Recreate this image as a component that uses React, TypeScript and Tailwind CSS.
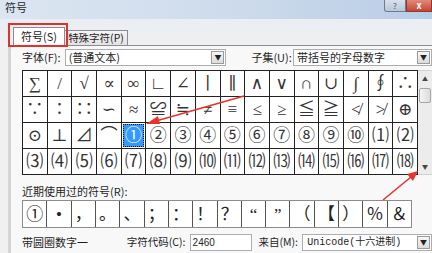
const symbols = [
  "∑", "/", "√", "∝", "∞", "∟", "∠", "∣", "∥", "∧", "∨", "∩", "∪", "∫", "∮", "∴",
  "∵", "∶", "∷", "∽", "≈", "≌", "≒", "≠", "≡", "≤", "≥", "≦", "≧", "≮", "≯", "⊕",
  "⊙", "⊥", "⊿", "⌒", "①", "②", "③", "④", "⑤", "⑥", "⑦", "⑧", "⑨", "⑩", "⑴", "⑵",
  "⑶", "⑷", "⑸", "⑹", "⑺", "⑻", "⑼", "⑽", "⑾", "⑿", "⒀", "⒁", "⒂", "⒃", "⒄", "⒅",
];

const recent = ["①", "•", "，", "。", "、", "；", "：", "！", "？", "“", "”", "（", "【", "）", "％", "＆"];

const ui = "font-['Noto_Sans_CJK_SC',sans-serif] text-[11px] text-[#1e1e1e]";
const sym = "font-['Liberation_Serif','DejaVu_Serif','Noto_Sans_CJK_SC',serif]";

const Arrow = () => <span className="text-[7px] leading-none text-[#222]">▼</span>;

const Dropdown: React.FC<{ width: string; text: string; mono?: boolean }> = ({ width, text, mono }) => {
  return (
    <div className={`${width} flex h-[17px] items-center border border-[#abadb3] bg-white`}>
      <span
        className={
          mono
            ? "flex-1 whitespace-nowrap pl-[4px] font-['Liberation_Mono','Noto_Sans_CJK_SC',monospace] text-[10px] leading-none text-[#222]"
            : "flex-1 whitespace-nowrap pl-[3px] leading-none"
        }
      >
        {text}
      </span>
      <div className="mr-px flex h-[13px] w-[13px] items-center justify-center border border-[#9a9a9a] bg-gradient-to-b from-[#f6f6f6] to-[#dcdcdc]">
        <Arrow />
      </div>
    </div>
  );
};

const SymbolDialog: React.FC = () => {
  return (
    <div className={`relative h-[253px] w-[432px] overflow-hidden bg-[#f0f0f0] ${ui}`}>
      {/* title bar */}
      <div className="flex h-[19px] items-start bg-gradient-to-r from-[#dce6f2] via-[#cfdcec] to-[#b8cde6]">
        <span className="mt-[2px] pl-[5px] text-[11px] leading-none text-[#2a2a2a]">符号</span>
        <div className="ml-auto flex">
          <div className="flex h-[12px] w-[22px] items-center justify-center rounded-bl-[3px] border border-t-0 border-[#6d7b8d] bg-gradient-to-b from-[#d8e1ec] to-[#b9c8da] text-[8px] leading-none text-[#555]">
            ?
          </div>
          <div className="flex h-[12px] w-[26px] items-center justify-center border border-t-0 border-[#8a3a30] bg-gradient-to-b from-[#e08a78] to-[#c7432f] text-[9px] font-bold leading-none text-white">
            x
          </div>
        </div>
      </div>

      {/* tabs */}
      <div className="flex h-[26px] items-end bg-gradient-to-b from-[#e9eef4] to-[#f0f0f0] pl-[13px]">
        <div className="flex h-[18px] w-[52px] items-center justify-center whitespace-nowrap border border-b-0 border-[#898c95] bg-white">
          符号(S)
        </div>
        <div className="flex h-[15px] w-[63px] items-center justify-center whitespace-nowrap border border-b-0 border-l-0 border-[#898c95] bg-gradient-to-b from-[#f4f4f4] to-[#e3e3e3] text-[10.5px]">
          特殊字符(P)
        </div>
      </div>

      {/* panel */}
      <div className="ml-[8px] h-[208px] border-l-[3px] border-t border-[#d4d4d4] border-t-[#898c95] bg-[#f8f8f8] pl-[11px]">
        <div className="mt-[3px] flex h-[17px] items-center">
          <span className="w-[43px] whitespace-nowrap leading-none">字体(F):</span>
          <Dropdown width="w-[163px]" text="(普通文本)" />
          <span className="ml-[25px] w-[42px] whitespace-nowrap leading-none">子集(U):</span>
          <Dropdown width="w-[140px]" text="带括号的字母数字" />
        </div>

        <div className="mt-[4px] flex">
          <div className="grid w-[397px] grid-cols-16 gap-px border border-[#222] bg-[#222]">
            {symbols.map((s, i) =>
              i === 36 ? (
                <div key={i} className="flex h-[25px] items-center justify-center bg-white p-px">
                  <div
                    className={`flex h-full w-full items-center justify-center border border-dotted border-[#111] bg-[#3399ff] text-[17px] leading-none text-white ${sym}`}
                  >
                    {s}
                  </div>
                </div>
              ) : (
                <div
                  key={i}
                  className={`flex h-[25px] items-center justify-center bg-white text-[17px] leading-none text-[#333] ${sym}`}
                >
                  {s}
                </div>
              ),
            )}
          </div>
          {/* scrollbar */}
          <div className="flex h-[105px] w-[14px] flex-col items-center border-y border-[#d0d0d0] bg-[#ececec]">
            <span className="mt-[5px] text-[6px] leading-none text-[#444]">▲</span>
            <div className="mt-[6px] h-[15px] w-[12px] rounded-[2px] border border-[#a6a6a6] bg-gradient-to-r from-[#f4f4f4] to-[#dcdcdc]" />
            <span className="mt-auto mb-[4px] text-[6px] leading-none text-[#444]">▼</span>
          </div>
        </div>

        <div className="mt-[11px] whitespace-nowrap leading-none">近期使用过的符号(R):</div>

        <div className="mt-[3px] grid w-[390px] grid-cols-16 gap-px border border-[#8c8c8c] bg-[#555]">
          {recent.map((s, i) => (
            <div
              key={i}
              className={`flex h-[26px] items-center justify-center bg-white text-[17px] leading-none text-[#222] ${sym}`}
            >
              {s}
            </div>
          ))}
        </div>

        <div className="mt-[6px] flex h-[17px] items-center">
          <span className="w-[105px] whitespace-nowrap leading-none">带圆圈数字一</span>
          <span className="w-[63px] whitespace-nowrap text-[10.5px] leading-none">字符代码(C):</span>
          <div className="flex h-[17px] w-[63px] items-center border border-[#abadb3] bg-white pl-[2px] font-['Liberation_Sans',sans-serif] text-[10px] leading-none">
            2460
          </div>
          <span className="ml-[6px] w-[44px] whitespace-nowrap text-[10.5px] leading-none">来自(M):</span>
          <Dropdown width="w-[130px]" text="Unicode(十六进制)" mono />
        </div>
      </div>

      {/* red highlight around the active tab */}
      <div className="pointer-events-none absolute left-[8px] top-[23px] h-[24px] w-[60px] border-2 border-[#e2312b]" />

      {/* red arrows */}
      <svg className="pointer-events-none absolute left-0 top-0" width="432" height="253" viewBox="0 0 432 253">
        <line x1="244" y1="96" x2="156" y2="121" stroke="#e8332c" strokeWidth="1.6" />
        <polygon points="146,124 158,116 160,124" fill="#e8332c" />
        <line x1="383" y1="200" x2="411" y2="177" stroke="#e8332c" strokeWidth="1.6" />
        <polygon points="418,171 407,174 413,181" fill="#e8332c" />
      </svg>
    </div>
  );
};

export default function App() {
  return <SymbolDialog />;
}
